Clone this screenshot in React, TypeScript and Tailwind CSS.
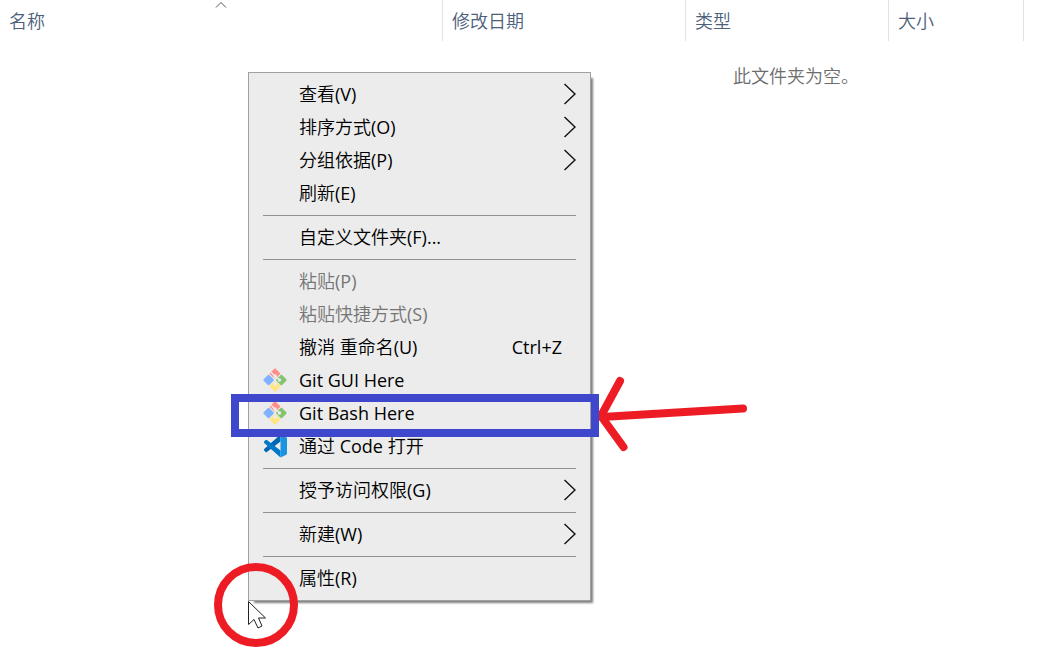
import React from "react";

type Entry =
  | { kind: "separator" }
  | {
      kind: "item";
      label: string;
      icon?: React.ReactNode;
      shortcut?: string;
      submenu?: boolean;
      disabled?: boolean;
    };

function GitIcon() {
  return (
    <svg width="26" height="26" viewBox="0 0 26 26" aria-hidden="true">
      <g transform="rotate(45 13 13)">
        <rect x="4.5" y="4.5" width="8" height="8" rx="1" fill="#ff8f88" />
        <rect x="13.5" y="4.5" width="8" height="8" rx="1" fill="#84c46e" />
        <rect x="4.5" y="13.5" width="8" height="8" rx="1" fill="#80b3ff" />
        <rect x="13.5" y="13.5" width="8" height="8" rx="1" fill="#ffe680" />
      </g>
      <path d="M9 5l4 4.500v8M13 9l5 4.500" fill="none" stroke="#ececec" strokeWidth="1.3" />
      <circle cx="13" cy="9" r="1.7" fill="#ececec" />
      <circle cx="17.500" cy="13" r="1.700" fill="#ececec" />
      <circle cx="13" cy="17" r="1.700" fill="#ececec" />
    </svg>
  );
}

function CodeIcon() {
  return (
    <svg width="24" height="24" viewBox="0 0 24 24" aria-hidden="true">
      <path d="M17.5 0.6L1.2 15.1c-.5.5-.5 1.100 0 1.500l1.400 1.300c.4.3.9.3 1.300 0L17.500 7.500z" fill="#0068b3" />
      <path d="M17.5 23.4L1.2 8.9c-.5-.5-.5-1.100 0-1.500l1.400-1.300c.4-.3.9-.3 1.300 0L17.500 16.500z" fill="#0078c8" />
      <path d="M17.5 0.5L22.8 3c.7.3 1.2 1 1.2 1.800v14.400c0 .8-.5 1.500-1.200 1.800l-5.300 2.500z" fill="#1a93e0" />
    </svg>
  );
}

const separator: Entry = { kind: "separator" };

const entries: Entry[] = [
  { kind: "item", label: "查看(V)", submenu: true },
  { kind: "item", label: "排序方式(O)", submenu: true },
  { kind: "item", label: "分组依据(P)", submenu: true },
  { kind: "item", label: "刷新(E)" },
  separator,
  { kind: "item", label: "自定义文件夹(F)..." },
  separator,
  { kind: "item", label: "粘贴(P)", disabled: true },
  { kind: "item", label: "粘贴快捷方式(S)", disabled: true },
  { kind: "item", label: "撤消 重命名(U)", shortcut: "Ctrl+Z" },
  { kind: "item", label: "Git GUI Here", icon: <GitIcon /> },
  { kind: "item", label: "Git Bash Here", icon: <GitIcon /> },
  { kind: "item", label: "通过 Code 打开", icon: <CodeIcon /> },
  separator,
  { kind: "item", label: "授予访问权限(G)", submenu: true },
  separator,
  { kind: "item", label: "新建(W)", submenu: true },
  separator,
  { kind: "item", label: "属性(R)" },
];

function MenuRow({ entry }: { entry: Entry }) {
  if (entry.kind === "separator") {
    return <hr className="mx-3.5 mt-1.5 mb-1 border-t border-[#919191]" />;
  }
  return (
    <button
      type="button"
      role="menuitem"
      disabled={entry.disabled}
      className="flex h-[33px] w-full items-center pr-3.5 pl-3 text-left text-black disabled:text-[#757575]"
    >
      <span className="flex w-7 shrink-0 justify-center">{entry.icon}</span>
      <span className="ml-2.5 grow whitespace-nowrap">{entry.label}</span>
      {entry.shortcut && <span className="mr-3.5">{entry.shortcut}</span>}
      {entry.submenu && (
        <svg width="13" height="22" viewBox="0 0 13 22" aria-hidden="true">
          <path d="M1.500 1L12 11l-10.500 10" fill="none" stroke="#111" strokeWidth="1.400" />
        </svg>
      )}
    </button>
  );
}

function FileList() {
  return (
    <table className="w-full table-fixed border-collapse">
      <colgroup>
        <col className="w-[443px]" />
        <col className="w-[243px]" />
        <col className="w-[203px]" />
        <col className="w-[135px]" />
        <col />
      </colgroup>
      <thead>
        <tr className="h-[41px] text-left text-[#4c607a]">
          <th className="p-0 font-normal">
            <button type="button" className="flex h-[41px] w-full items-center border-r border-[#e2e2e2] px-[9px]">
              <span className="grow basis-0 text-left">名称</span>
              <svg width="12" height="8" viewBox="0 0 12 8" className="mt-px self-start" aria-label="升序">
                <path d="M1 6.500L6 1.500l5 5" fill="none" stroke="#555" />
              </svg>
              <span className="grow basis-0" />
            </button>
          </th>
          {["修改日期", "类型", "大小"].map((name) => (
            <th key={name} className="p-0 font-normal">
              <button type="button" className="flex h-[41px] w-full items-center border-r border-[#e2e2e2] px-[9px]">
                {name}
              </button>
            </th>
          ))}
          <td />
        </tr>
      </thead>
      <tbody>
        <tr>
          <td colSpan={5} className="pt-[21px] pl-[733px] whitespace-nowrap text-[#6d6d6d]">
            此文件夹为空。
          </td>
        </tr>
      </tbody>
    </table>
  );
}

function Annotations() {
  return (
    <svg
      width="1041"
      height="653"
      viewBox="0 0 1041 653"
      className="pointer-events-none absolute top-0 left-0"
      aria-hidden="true"
    >
      <path
        d="M248.500 601.500v23l5.500-5 4 8.500 4-2-3.500-8h7z"
        fill="#fff"
        stroke="#222"
      />
      <g fill="none" stroke="#ed1c24" strokeWidth="8" strokeLinecap="round" strokeLinejoin="round">
        <path d="M743 408.500L602 417" />
        <path d="M620 381L601 416l22.500 31" />
        <circle cx="256" cy="605" r="38" />
      </g>
      <rect x="235" y="398" width="360" height="35" fill="#fff" fillOpacity="0" stroke="#3f48cc" strokeWidth="8" />
    </svg>
  );
}

export default function App() {
  return (
    <main className="relative min-h-screen overflow-hidden bg-white font-['Open_Sans','Noto_Sans_CJK_SC_DemiLight','Noto_Sans_CJK_SC_Light','Noto_Sans_CJK_SC',sans-serif] text-[18px] leading-7 font-normal">
      <FileList />
      <div
        role="menu"
        className="absolute top-[72px] left-[248px] w-[343px] border border-[#a0a0a0] bg-[#ececec] pt-1 pb-1.5 shadow-[4px_4px_2px_-2px_#808080]"
      >
        {entries.map((entry, i) => (
          <MenuRow key={i} entry={entry} />
        ))}
      </div>
      <Annotations />
    </main>
  );
}
